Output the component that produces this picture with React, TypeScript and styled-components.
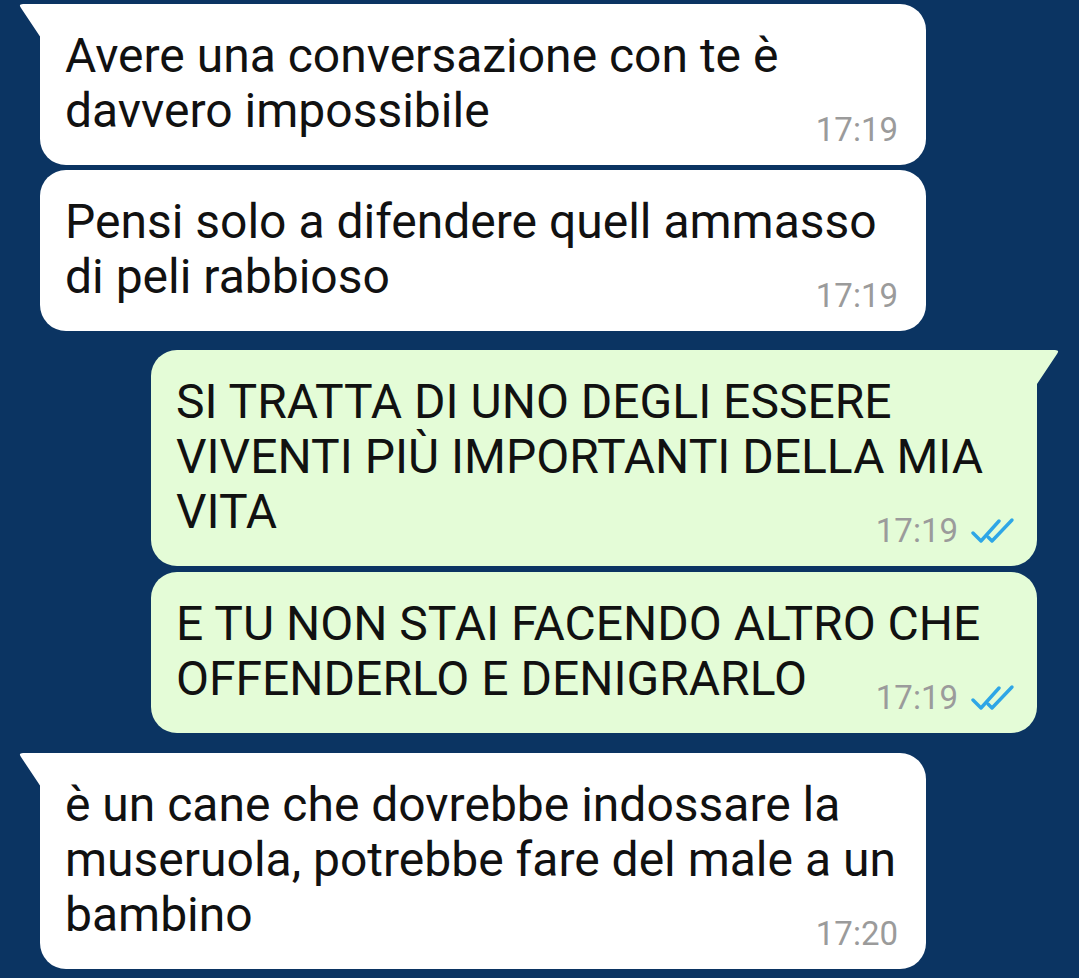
import React from 'react';
import styled, { createGlobalStyle } from 'styled-components';

const palette = {
    background: '#0b3462',
    incoming: '#ffffff',
    outgoing: '#e4fcd7',
    text: '#111111',
    time: '#9b9b9b',
    tick: '#2ea6e6',
}

const GlobalStyle = createGlobalStyle`
    html, body {
        margin: 0;
        padding: 0;
        background: ${palette.background};
    }
    body {
        font-family: Roboto, 'Noto Sans', sans-serif;
    }
`

const Chat = styled.div`
    display: flex;
    flex-direction: column;
    width: 1079px;
    height: 978px;
    padding-top: 4px;
    box-sizing: border-box;
    background: ${palette.background};
    overflow: hidden;
`

const Row = styled.div<{ $out?: boolean; $gap: number }>`
    display: flex;
    justify-content: ${p => (p.$out ? 'flex-end' : 'flex-start')};
    padding: ${p => (p.$out ? '0 42px 0 0' : '0 0 0 40px')};
    margin-top: ${p => p.$gap}px;
`

const Bubble = styled.div<{ $out?: boolean; $tail?: boolean }>`
    position: relative;
    display: flex;
    flex-direction: column;
    width: 886px;
    box-sizing: border-box;
    padding: ${p => (p.$out ? '24px 22px 17px 25px' : '24px 28px 17px 25px')};
    background: ${p => (p.$out ? palette.outgoing : palette.incoming)};
    border-radius: 26px;
    ${p => p.$tail && (p.$out ? 'border-top-right-radius: 0;' : 'border-top-left-radius: 0;')}
`

const Tail = styled.svg<{ $out?: boolean }>`
    position: absolute;
    top: 0;
    ${p => (p.$out ? 'right: -22px;' : 'left: -21px;')}
    width: 22px;
    height: 34px;
`

const Text = styled.div`
    font-size: 48px;
    line-height: 55px;
    color: ${palette.text};
`

const Meta = styled.div`
    display: flex;
    align-items: center;
    align-self: flex-end;
    gap: 13px;
    margin-top: -26px;
    height: 36px;
    font-size: 33px;
    line-height: 36px;
    color: ${palette.time};
`

const Ticks = () => (
    <svg width="44" height="28" viewBox="0 0 44 28" fill="none" stroke={palette.tick} strokeWidth="3.4" strokeLinecap="round" strokeLinejoin="round">
        <path d="M2 16 L10 24 L28 4" />
        <path d="M17 20 L21 24 L41 3" />
    </svg>
)

interface Msg {
    text: string
    time: string
    out?: boolean
    tail?: boolean
    gap: number
}

const messages: Msg[] = [
    { text: 'Avere una conversazione con te è davvero impossibile', time: '17:19', tail: true, gap: 0 },
    { text: 'Pensi solo a difendere quell ammasso di peli rabbioso', time: '17:19', gap: 5 },
    { text: 'SI TRATTA DI UNO DEGLI ESSERE VIVENTI PIÙ IMPORTANTI DELLA MIA VITA', time: '17:19', out: true, tail: true, gap: 19 },
    { text: 'E TU NON STAI FACENDO ALTRO CHE OFFENDERLO E DENIGRARLO', time: '17:19', out: true, gap: 6 },
    { text: 'è un cane che dovrebbe indossare la museruola, potrebbe fare del male a un bambino', time: '17:20', tail: true, gap: 20 },
]

export default function App() {
    return (
        <Chat>
            <GlobalStyle />
            {messages.map((m, i) => (
                <Row key={i} $out={m.out} $gap={m.gap}>
                    <Bubble $out={m.out} $tail={m.tail}>
                        {m.tail && (
                            <Tail $out={m.out} viewBox="0 0 22 34">
                                {m.out
                                    ? <path d="M0 0 L18 0 Q23 0 20 4 L0 34 Z" fill={palette.outgoing} />
                                    : <path d="M22 0 L4 0 Q-1 0 2 4 L22 34 Z" fill={palette.incoming} />}
                            </Tail>
                        )}
                        <Text>{m.text}</Text>
                        <Meta>
                            <span>{m.time}</span>
                            {m.out && <Ticks />}
                        </Meta>
                    </Bubble>
                </Row>
            ))}
        </Chat>
    )
}
